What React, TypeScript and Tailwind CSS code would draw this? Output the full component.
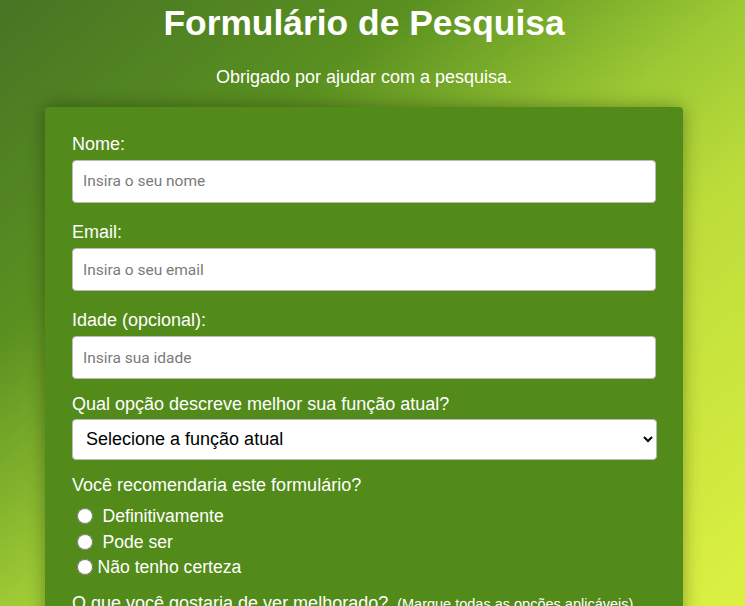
import { useState } from "react";

const recommend = [
  { value: "definitely", label: "Definitivamente", spaced: true },
  { value: "maybe", label: "Pode ser", spaced: true },
  { value: "not-sure", label: "Não tenho certeza", spaced: false },
];

const improvements = [
  "Interface",
  "Perguntas",
  "Velocidade",
  "Design",
  "Outro",
];

export default function App() {
  const [choice, setChoice] = useState("");

  return (
    <div className="min-h-screen bg-fixed bg-[linear-gradient(to_bottom_right,#467524_0%,#5a9020_28%,#9cc934_50%,#bcdc3a_64%,#dcf142_100%)] pr-[17px] font-['Liberation_Sans',Arial,sans-serif] text-[18px] text-white">
      <header className="pt-[3px] text-center">
        <h1 className="text-[35.4px] font-bold leading-[40.5px]">Formulário de Pesquisa</h1>
        <p className="mt-[23px] leading-[20.2px]">Obrigado por ajudar com a pesquisa.</p>
      </header>

      <form className="mx-auto mt-5 mb-10 w-[638px] rounded-[4px] bg-[#538b1a] px-[27px] pt-[27px] pb-8 shadow-[0_0_18px_rgba(0,0,0,0.35)]">
        <div className="mb-[19px]">
          <label htmlFor="name" className="mb-[6px] block leading-[20.2px]">Nome:</label>
          <input
            id="name"
            type="text"
            placeholder="Insira o seu nome"
            className="block h-[43px] w-full rounded-[4px] border border-[#b9b9b9] bg-white px-[10px] font-['Roboto',sans-serif] text-[15.5px] text-black placeholder:text-[#7a7a7a]"
          />
        </div>

        <div className="mb-[19px]">
          <label htmlFor="email" className="mb-[6px] block leading-[20.2px]">Email:</label>
          <input
            id="email"
            type="email"
            placeholder="Insira o seu email"
            className="block h-[43px] w-full rounded-[4px] border border-[#b9b9b9] bg-white px-[10px] font-['Roboto',sans-serif] text-[15.5px] text-black placeholder:text-[#7a7a7a]"
          />
        </div>

        <div className="mb-[15px]">
          <label htmlFor="age" className="mb-[6px] block leading-[20.2px]">Idade (opcional):</label>
          <input
            id="age"
            type="number"
            placeholder="Insira sua idade"
            className="block h-[43px] w-full rounded-[4px] border border-[#b9b9b9] bg-white px-[10px] font-['Roboto',sans-serif] text-[15.5px] text-black placeholder:text-[#7a7a7a]"
          />
        </div>

        <div className="mb-[15px]">
          <label htmlFor="role" className="mb-[4px] block leading-[20.2px]">Qual opção descreve melhor sua função atual?</label>
          <select
            id="role"
            defaultValue=""
            className="block h-[41px] w-[585px] rounded-[4px] border border-[#b9b9b9] bg-white pl-[9px] pr-1 text-[18px] text-black"
          >
            <option value="" disabled>Selecione a função atual</option>
            <option value="student">Estudante</option>
            <option value="job">Trabalho em tempo integral</option>
            <option value="learner">Aprendiz em tempo integral</option>
            <option value="none">Prefiro não dizer</option>
            <option value="other">Outro</option>
          </select>
        </div>

        <div className="mb-[13px]">
          <p className="mb-[9px] leading-[20.2px]">Você recomendaria este formulário?</p>
          {recommend.map((r) => (
            <label key={r.value} className="flex h-[25.5px] items-center text-[17.6px]">
              <input
                type="radio"
                name="recommend"
                value={r.value}
                checked={choice === r.value}
                onChange={() => setChoice(r.value)}
                className="m-0 ml-[4.5px] mr-[5px] h-4 w-4"
              />
              <span className={r.spaced ? "pl-[5px]" : ""}>{r.label}</span>
            </label>
          ))}
        </div>

        <div className="mb-[19px]">
          <p className="mb-[8px] leading-[20.2px]">
            O que você gostaria de ver melhorado?
            <span className="ml-[9px] text-[14.5px]">(Marque todas as opções aplicáveis)</span>
          </p>
          {improvements.map((item) => (
            <label key={item} className="flex h-[25.5px] items-center text-[17.6px]">
              <input type="checkbox" value={item} className="m-0 ml-[4.5px] mr-[8px] h-4 w-4" />
              <span>{item}</span>
            </label>
          ))}
        </div>

        <div className="mb-[19px]">
          <label htmlFor="comments" className="mb-[6px] block leading-[20.2px]">Algum comentário ou sugestão?</label>
          <textarea
            id="comments"
            placeholder="Insira seu comentário aqui..."
            className="block h-[120px] w-full resize-none rounded-[4px] border border-[#b9b9b9] bg-white p-[10px] font-['Roboto',sans-serif] text-[15.5px] text-black placeholder:text-[#7a7a7a]"
          />
        </div>

        <button type="submit" className="block h-[44px] w-full rounded-[4px] bg-[#37b24d] text-[17.6px] text-white">
          Enviar
        </button>
      </form>
    </div>
  );
}
